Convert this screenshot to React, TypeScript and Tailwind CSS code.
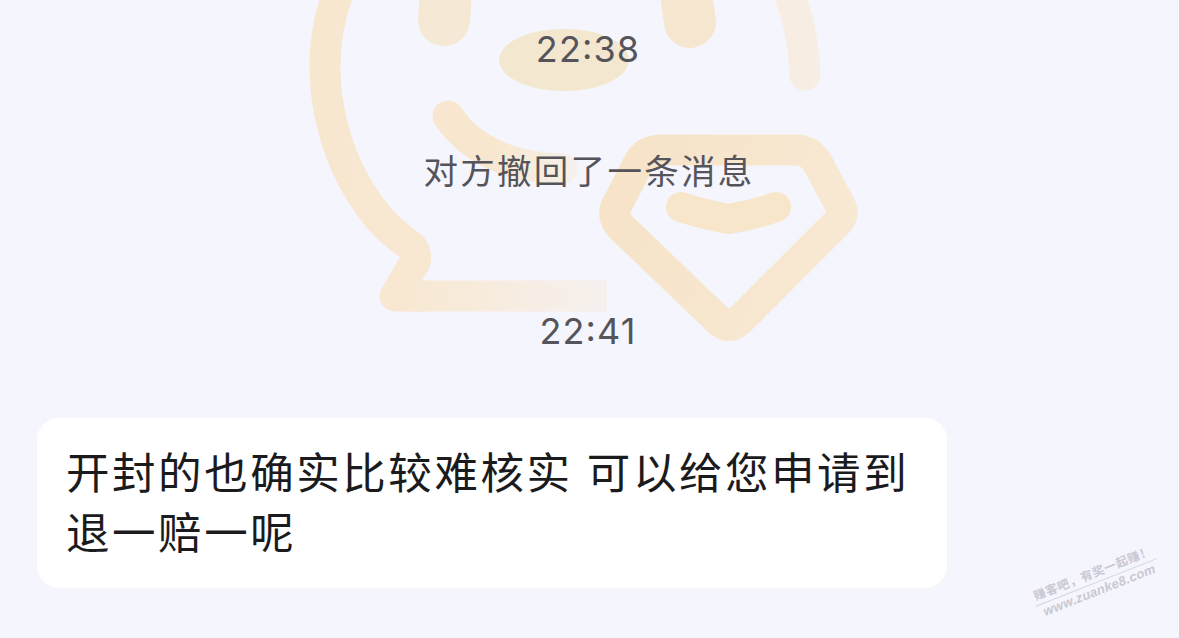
type Message = { kind: 'time' | 'notice'; text: string }

const timeline: Message[] = [
  { kind: 'time', text: '22:38' },
  { kind: 'notice', text: '对方撤回了一条消息' },
]

function Mascot() {
  return (
    <svg
      aria-hidden="true"
      className="absolute inset-0"
      width="1179"
      height="638"
      viewBox="0 0 1179 638"
      fill="none"
      strokeWidth="31"
      strokeLinejoin="round"
    >
      <defs>
        <linearGradient id="face" x1="309" y1="100" x2="822" y2="100" gradientUnits="userSpaceOnUse">
          <stop stopColor="#f8e7cf" />
          <stop offset="0.55" stopColor="#f7e9d7" />
          <stop offset="1" stopColor="#f7eee4" />
        </linearGradient>
        <linearGradient id="tail" x1="400" y1="0" x2="608" y2="0" gradientUnits="userSpaceOnUse">
          <stop stopColor="#f8e8d1" />
          <stop offset="0.6" stopColor="#f7ede3" />
          <stop offset="1" stopColor="#f5f0ee" />
        </linearGradient>
        <linearGradient id="smile" x1="432" y1="110" x2="580" y2="170" gradientUnits="userSpaceOnUse">
          <stop stopColor="#f8e6d0" />
          <stop offset="0.45" stopColor="#f8e7cf" />
          <stop offset="1" stopColor="#f5f1ec" />
        </linearGradient>
        <linearGradient id="gem" x1="620" y1="170" x2="850" y2="260" gradientUnits="userSpaceOnUse">
          <stop stopColor="#f6e3c8" />
          <stop offset="1" stopColor="#f8e9d4" />
        </linearGradient>
      </defs>
      <path d="M341 -15C308 65 329 158 379 218Q389 230 408 244Q418 251 415 262L395 296H425" stroke="url(#face)" />
      <path d="M787 -12Q804 30 805 75" stroke="url(#face)" strokeLinecap="round" />
      <path d="M410 296H607" stroke="url(#tail)" />
      <path d="M447 -20L444 20" stroke="#f5e9d5" strokeWidth="52" strokeLinecap="round" />
      <path d="M684 -20L690 22" stroke="#f5e6cf" strokeWidth="52" strokeLinecap="round" />
      <ellipse cx="564" cy="60" rx="65" ry="31" fill="#f4e7d0" />
      <path d="M448 116C468 146 505 168 562 169" stroke="url(#smile)" strokeLinecap="round" />
      <path
        d="M662 150H796Q809 150 817 162L839 203Q846 214 837 223L740 320Q729 331 718 320L621 227Q611 216 617 205L638 164Q645 150 662 150Z"
        stroke="url(#gem)"
      />
      <path d="M681 207Q705 215 729 219Q753 215 776 207" stroke="#f7e6ca" strokeWidth="30" strokeLinecap="round" />
    </svg>
  )
}

function Timestamp({ children }: { children: string }) {
  const [hours, minutes] = children.split(':')
  return (
    <time className="block font-['Inter',sans-serif] text-[36px] leading-[40px] tracking-[1.1px] text-[#55545a]">
      {hours}
      <span className="relative -top-[3px]">:</span>
      {minutes}
    </time>
  )
}

function SiteMark() {
  return (
    <div className="absolute left-[1031px] top-[564px] w-[130px] -rotate-[21.5deg] whitespace-nowrap text-center font-['Liberation_Sans','Noto_Sans_CJK_SC',sans-serif] font-bold text-[#c9c8d3]">
      <div className="border-b border-[#d5d4df] text-[12px] leading-[18px] tracking-[0.6px]">赚客吧，有奖一起赚！</div>
      <div className="text-[13px] italic leading-[16px] tracking-[0.3px]">www.zuanke8.com</div>
    </div>
  )
}

export default function App() {
  return (
    <main className="relative h-[638px] w-[1179px] overflow-hidden bg-[#f5f5fd]">
      <Mascot />
      <div className="relative flex flex-col items-center pr-[3px] pt-[29px]">
        {timeline.map((item) =>
          item.kind === 'time' ? (
            <Timestamp key={item.text}>{item.text}</Timestamp>
          ) : (
            <p
              key={item.text}
              className="mt-[75px] pl-[2px] font-['Noto_Sans_CJK_SC',sans-serif] text-[34.5px] leading-[50px] tracking-[2.3px] text-[#55545a]"
            >
              {item.text}
            </p>
          ),
        )}
        <div className="mt-[117px]">
          <Timestamp>22:41</Timestamp>
        </div>
      </div>
      <div className="relative ml-[37px] mt-[67px] h-[170px] w-[910px] rounded-[22px] bg-white pl-[29px] pt-[23px] shadow-[0_0_3px_#f7f7f9]">
        <p className="font-['Noto_Sans_CJK_SC',sans-serif] text-[43.5px] leading-[60px] tracking-[2.55px] text-[#1b1b1d] [word-spacing:2px]">
          开封的也确实比较难核实 可以给您申请到
          <br />
          退一赔一呢
        </p>
      </div>
      <SiteMark />
    </main>
  )
}
